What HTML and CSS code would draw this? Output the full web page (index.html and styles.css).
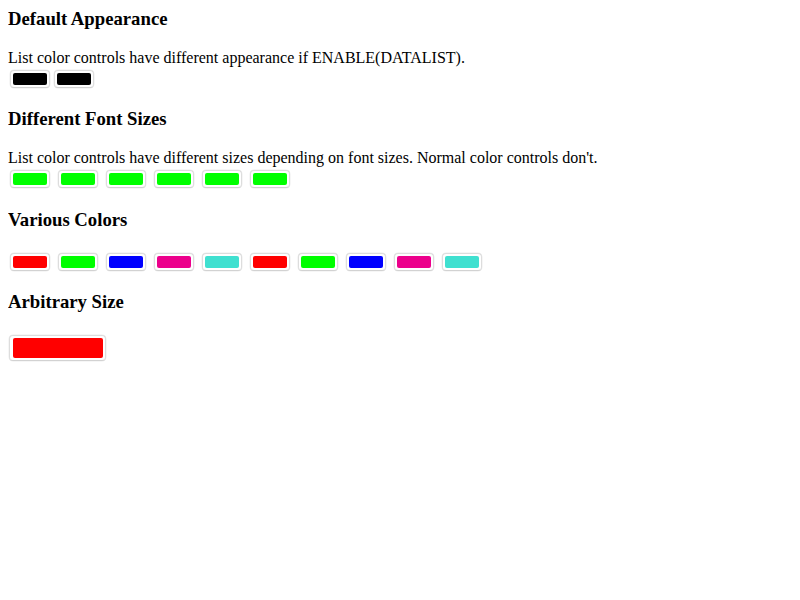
FILE: index.html
```html
<!DOCTYPE html>
<html>
<head>
<meta charset="utf-8">
<link rel="stylesheet" href="styles.css">
</head>
<body>
<h3>Default Appearance</h3>
<p>List color controls have different appearance if ENABLE(DATALIST).</p>
<div class="row tight">
  <span class="ctl"><span class="sw black"></span></span>
  <span class="ctl"><span class="sw black"></span></span>
</div>

<h3>Different Font Sizes</h3>
<p>List color controls have different sizes depending on font sizes. Normal color controls don't.</p>
<div class="row">
  <span class="ctl"><span class="sw lime"></span></span>
  <span class="ctl"><span class="sw lime"></span></span>
  <span class="ctl"><span class="sw lime"></span></span>
  <span class="ctl"><span class="sw lime"></span></span>
  <span class="ctl"><span class="sw lime"></span></span>
  <span class="ctl"><span class="sw lime"></span></span>
</div>

<h3>Various Colors</h3>
<div class="row">
  <span class="ctl"><span class="sw red"></span></span>
  <span class="ctl"><span class="sw lime"></span></span>
  <span class="ctl"><span class="sw blue"></span></span>
  <span class="ctl"><span class="sw magenta"></span></span>
  <span class="ctl"><span class="sw turquoise"></span></span>
  <span class="ctl"><span class="sw red"></span></span>
  <span class="ctl"><span class="sw lime"></span></span>
  <span class="ctl"><span class="sw blue"></span></span>
  <span class="ctl"><span class="sw magenta"></span></span>
  <span class="ctl"><span class="sw turquoise"></span></span>
</div>

<h3>Arbitrary Size</h3>
<div class="row">
  <span class="ctl big"><span class="sw red"></span></span>
</div>
</body>
</html>
```
FILE: styles.css
```css
body {
  margin: 8px;
  font-family: "Liberation Serif", "Times New Roman", serif;
  font-size: 16px;
  color: #000;
  background: #fff;
}
h3 {
  font-size: 18.72px;
  font-weight: bold;
  margin: 0 0 18.72px;
}
p {
  margin: 0;
}
.row {
  display: flex;
  align-items: flex-start;
  gap: 8px;
  box-sizing: border-box;
  height: 23px;
  padding: 3px 0 0 2px;
  margin-bottom: 18.72px;
}
.row.tight {
  gap: 4px;
}
.ctl {
  display: flex;
  box-sizing: border-box;
  width: 40px;
  height: 18px;
  padding: 2px;
  border: 1px solid #dddddd;
  border-bottom-color: #d2d2d2;
  border-radius: 4px;
  background: #fff;
  box-shadow: 0 0 0 0.5px #eeeeee;
}
.ctl.big {
  width: 97px;
  height: 26px;
  padding: 2px 2px 2px 3px;
  margin-left: -1px;
}
.sw {
  flex: 1;
  border-radius: 2px;
}
.black { background: #000; }
.lime { background: #00ff00; }
.red { background: #ff0000; }
.blue { background: #0000ff; }
.magenta { background: #ec008c; }
.turquoise { background: #40e0d0; }
```
